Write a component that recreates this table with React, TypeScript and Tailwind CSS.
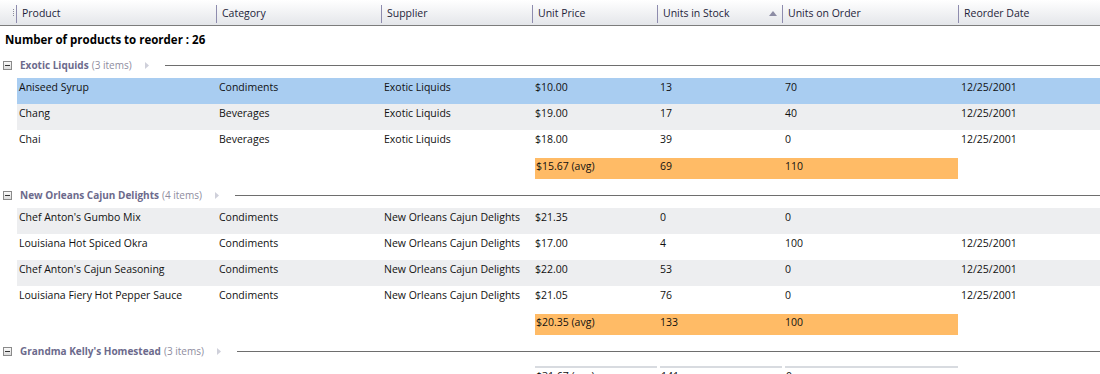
import React from 'react';

type Row = {
  product: string;
  category: string;
  supplier: string;
  price: string;
  stock: string;
  order: string;
  date: string;
};

type Group = {
  name: string;
  count: number;
  rows: Row[];
  summary: [string, string, string];
};

const groups: Group[] = [
  {
    name: 'Exotic Liquids',
    count: 3,
    rows: [
      { product: 'Aniseed Syrup', category: 'Condiments', supplier: 'Exotic Liquids', price: '$10.00', stock: '13', order: '70', date: '12/25/2001' },
      { product: 'Chang', category: 'Beverages', supplier: 'Exotic Liquids', price: '$19.00', stock: '17', order: '40', date: '12/25/2001' },
      { product: 'Chai', category: 'Beverages', supplier: 'Exotic Liquids', price: '$18.00', stock: '39', order: '0', date: '12/25/2001' },
    ],
    summary: ['$15.67 (avg)', '69', '110'],
  },
  {
    name: 'New Orleans Cajun Delights',
    count: 4,
    rows: [
      { product: "Chef Anton's Gumbo Mix", category: 'Condiments', supplier: 'New Orleans Cajun Delights', price: '$21.35', stock: '0', order: '0', date: '' },
      { product: 'Louisiana Hot Spiced Okra', category: 'Condiments', supplier: 'New Orleans Cajun Delights', price: '$17.00', stock: '4', order: '100', date: '12/25/2001' },
      { product: "Chef Anton's Cajun Seasoning", category: 'Condiments', supplier: 'New Orleans Cajun Delights', price: '$22.00', stock: '53', order: '0', date: '12/25/2001' },
      { product: 'Louisiana Fiery Hot Pepper Sauce', category: 'Condiments', supplier: 'New Orleans Cajun Delights', price: '$21.05', stock: '76', order: '0', date: '12/25/2001' },
    ],
    summary: ['$20.35 (avg)', '133', '100'],
  },
];

const font = { fontFamily: '"Open Sans", "Noto Sans", sans-serif' };

// 表頭欄位
const columns = ['Product', 'Category', 'Supplier', 'Unit Price', 'Units in Stock', 'Units on Order', 'Reorder Date'];

const rowCols = 'grid grid-cols-[199px_165px_151px_125px_125px_176px_1fr]';

const HeaderBar = () => (
  <div className="grid grid-cols-[16px_200px_165px_151px_125px_125px_176px_1fr] h-[26px] bg-gradient-to-b from-[#ffffff] to-[#e4e6ea] border-b border-[#7c7c7c]">
    <div className="flex items-center justify-end pr-[2px]">
      <div className="flex flex-col gap-[1px]">
        <span className="block w-[1px] h-[1px] bg-[#8c8c9c]" />
        <span className="block w-[1px] h-[1px] bg-[#8c8c9c]" />
        <span className="block w-[1px] h-[1px] bg-[#8c8c9c]" />
        <span className="block w-[1px] h-[1px] bg-[#8c8c9c]" />
      </div>
    </div>
    {columns.map((c) => (
      <div key={c} className="flex items-center pt-[2px]">
        <div className="w-[1px] h-[18px] bg-[#8e8cae]" />
        <span className="pl-[5px] text-[10.5px] text-[#1e1e3a] flex-1">{c}</span>
        {c === 'Units in Stock' && (
          <svg width="8" height="5" viewBox="0 0 8 5" className="mr-[5px]">
            <path d="M0 5 L4 0 L8 5 Z" fill="#8c8ca4" />
          </svg>
        )}
      </div>
    ))}
  </div>
);

const GroupHeader = ({ name, count }: { name: string; count: number }) => (
  <div className="flex items-center h-[26px]">
    <div className="ml-[3px] w-[9px] h-[9px] border border-[#8a8a8a] bg-gradient-to-b from-[#fafafa] to-[#dcdcdc] flex items-center justify-center">
      <span className="block w-[5px] h-[1px] bg-[#333]" />
    </div>
    <span className="ml-[8px] text-[10px] font-bold text-[#6c6a8c]">{name}</span>
    <span className="ml-[3px] text-[10px] text-[#8e8c9e]">({count} items)</span>
    <svg width="4" height="7" viewBox="0 0 4 7" className="ml-[13px]">
      <path d="M0 0 L4 3.5 L0 7 Z" fill="#cfd0da" />
    </svg>
    <div className="ml-[16px] flex-1 h-[1px] bg-[#6e6e6e]" />
  </div>
);

const DataRow = ({ row, index }: { row: Row; index: number }) => {
  const bg = index === 0 ? 'bg-[#a9cdf1]' : index % 2 === 1 ? 'bg-[#edeef0]' : 'bg-white';
  const cells = [row.product, row.category, row.supplier, row.price, row.stock, row.order, row.date];
  return (
    <div className={`${rowCols} ml-[17px] h-[26px] ${bg}`}>
      {cells.map((v, i) => (
        <div key={i} className={`${i === 0 ? 'pl-[2px]' : 'pl-[3px]'} pt-[2px] leading-[14px] text-[10.5px] text-[#111] whitespace-nowrap overflow-hidden`}>
          {v}
        </div>
      ))}
    </div>
  );
};

const SummaryRow = ({ values }: { values: [string, string, string] }) => (
  <div className={`${rowCols} ml-[17px] h-[21px]`}>
    <div />
    <div />
    <div />
    {values.map((v, i) => (
      <div
        key={i}
        className={`${i === 0 ? 'ml-[3px] pl-[1px]' : 'pl-[3px]'} pt-[1px] leading-[14px] text-[10.5px] text-[#111] bg-[#ffbb66]`}
      >
        {v}
      </div>
    ))}
  </div>
);

const FadedSummaryRow = ({ values }: { values: [string, string, string] }) => (
  <div className={`${rowCols} ml-[17px] h-[21px]`}>
    <div />
    <div />
    <div />
    {values.map((v, i) => (
      <div key={i} className="ml-[3px] pl-[1px] pt-[1px] leading-[14px] text-[10.5px] text-[#111] border-t-2 border-[#d8dbe0]">
        {v}
      </div>
    ))}
  </div>
);

export default function App() {
  let idx = 0;
  return (
    <div className="w-[1100px] h-[374px] overflow-hidden bg-white" style={font}>
      <HeaderBar />
      <div className="h-[26px] flex items-center pl-[5px] pt-[2px]">
        <span className="text-[11.5px] font-bold text-black">Number of products to reorder : 26</span>
      </div>
      {groups.map((g) => (
        <div key={g.name}>
          <GroupHeader name={g.name} count={g.count} />
          {g.rows.map((r) => {
            const i = idx++;
            return <DataRow key={r.product} row={r} index={i} />;
          })}
          <div className="h-[2px]" />
          <SummaryRow values={g.summary} />
          <div className="h-[3px]" />
        </div>
      ))}
      <GroupHeader name="Grandma Kelly's Homestead" count={3} />
      <div className="h-[2px]" />
      <FadedSummaryRow values={['$31.67 (avg)', '141', '0']} />
    </div>
  );
}
